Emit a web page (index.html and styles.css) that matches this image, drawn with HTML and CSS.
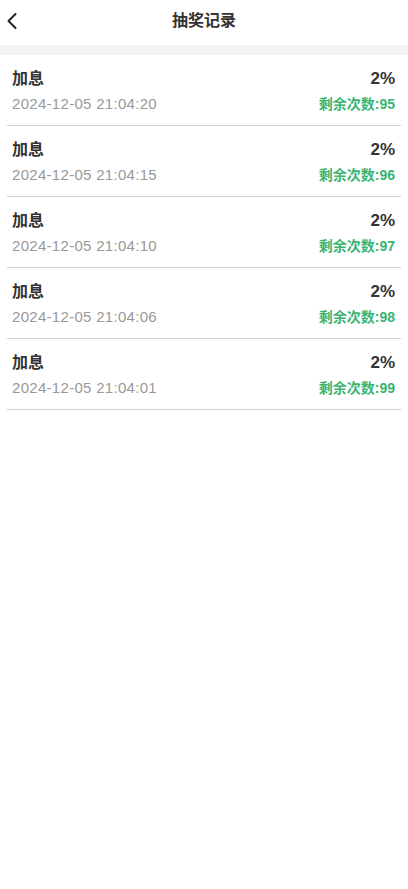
FILE: index.html
```html
<!DOCTYPE html>
<html lang="zh-CN">
<head>
  <meta charset="UTF-8" />
  <title>抽奖记录</title>
  <link rel="stylesheet" href="styles.css">
</head>
<body>
  <div class="navbar">
    <a class="back" href="#">
      <svg width="12" height="18" viewBox="0 0 12 18">
        <polyline points="9.5,2 2.5,9 9.5,16" fill="none" stroke="#222" stroke-width="2" stroke-linecap="round" stroke-linejoin="round" />
      </svg>
    </a>
    <h1>抽奖记录</h1>
  </div>

  <div class="spacer"></div>

  <ul class="records">
    <li class="record">
      <div class="left">
        <div class="name">加息</div>
        <div class="time">2024-12-05 21:04:20</div>
      </div>
      <div class="right">
        <div class="rate">2%</div>
        <div class="count">剩余次数:95</div>
      </div>
    </li>
    <li class="record">
      <div class="left">
        <div class="name">加息</div>
        <div class="time">2024-12-05 21:04:15</div>
      </div>
      <div class="right">
        <div class="rate">2%</div>
        <div class="count">剩余次数:96</div>
      </div>
    </li>
    <li class="record">
      <div class="left">
        <div class="name">加息</div>
        <div class="time">2024-12-05 21:04:10</div>
      </div>
      <div class="right">
        <div class="rate">2%</div>
        <div class="count">剩余次数:97</div>
      </div>
    </li>
    <li class="record">
      <div class="left">
        <div class="name">加息</div>
        <div class="time">2024-12-05 21:04:06</div>
      </div>
      <div class="right">
        <div class="rate">2%</div>
        <div class="count">剩余次数:98</div>
      </div>
    </li>
    <li class="record">
      <div class="left">
        <div class="name">加息</div>
        <div class="time">2024-12-05 21:04:01</div>
      </div>
      <div class="right">
        <div class="rate">2%</div>
        <div class="count">剩余次数:99</div>
      </div>
    </li>
  </ul>
</body>
</html>
```

FILE: styles.css
```css
body {
  margin: 0;
  padding: 0;
  font-family: "Liberation Sans", "Noto Sans CJK SC", sans-serif;
  background-color: #fff;
  color: #333;
}

.navbar {
  position: relative;
  height: 45px;
  display: flex;
  align-items: center;
  justify-content: center;
}

.back {
  position: absolute;
  left: 6px;
  top: 12px;
  display: block;
  line-height: 0;
}

.navbar h1 {
  margin: 0;
  font-size: 16px;
  font-weight: bold;
  color: #333;
  line-height: 22px;
  margin-top: -3px;
}

.spacer {
  height: 10px;
  background-color: #f4f4f4;
}

.records {
  list-style: none;
  margin: 0 7px;
  padding: 0;
}

.record {
  display: flex;
  justify-content: space-between;
  padding: 13px 6px 11px 5px;
  border-bottom: 1px solid #cfcfcf;
}

.right {
  text-align: right;
}

.name {
  font-size: 16px;
  font-weight: bold;
  line-height: 22px;
  color: #333;
}

.time {
  margin-top: 4px;
  font-size: 15px;
  line-height: 20px;
  letter-spacing: 0.3px;
  color: #999;
}

.rate {
  font-size: 17px;
  font-weight: bold;
  line-height: 22px;
  color: #333;
}

.count {
  margin-top: 4px;
  font-size: 14px;
  font-weight: bold;
  line-height: 20px;
  color: #3cb371;
}
```
